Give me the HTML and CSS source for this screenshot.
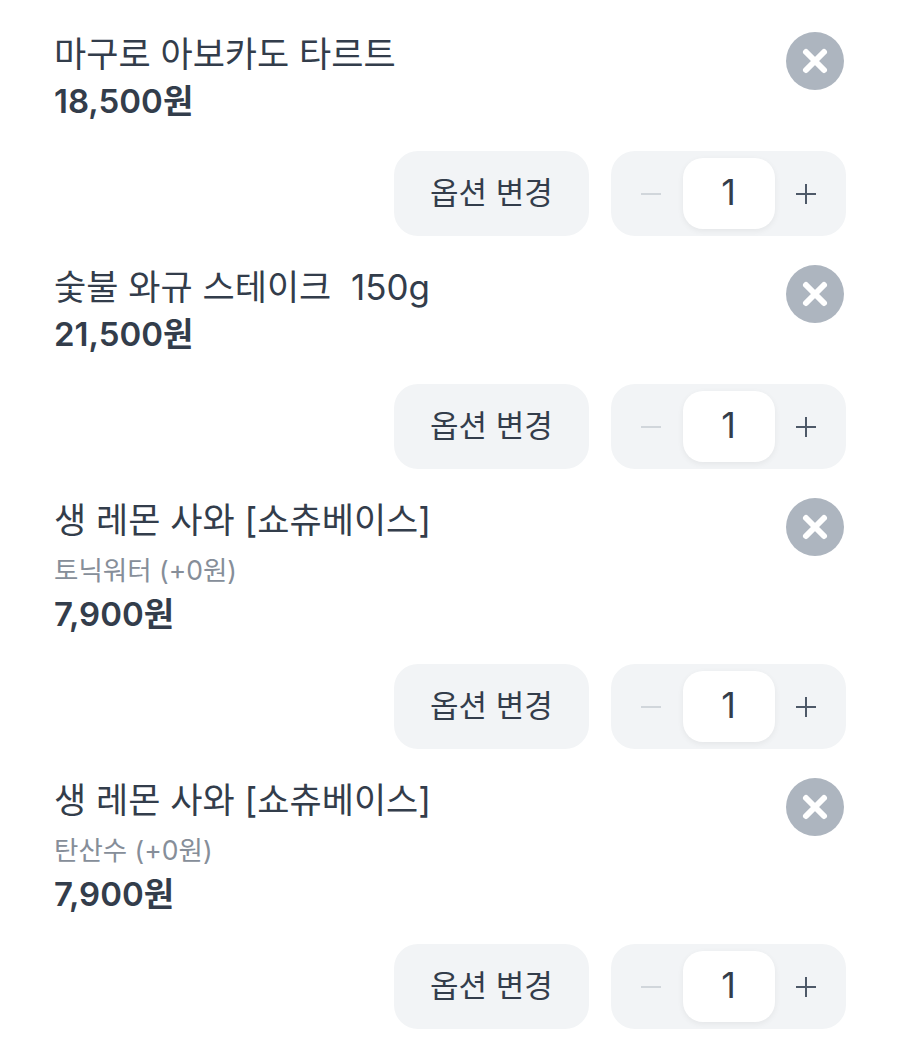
FILE: index.html
```html
<!DOCTYPE html>
<html lang="ko">
<head>
  <meta charset="UTF-8" />
  <meta name="viewport" content="width=device-width, initial-scale=1.0"/>
  <title>장바구니</title>
  <link rel="stylesheet" href="styles.css">
</head>
<body>

  <div class="cart">

    <div class="item">
      <div class="item-top">
        <div class="info">
          <p class="name">마구로 아보카도 타르트</p>
          <p class="price">18,500원</p>
        </div>
        <button class="remove">
          <svg viewBox="0 0 58 58" width="58" height="58"><path d="M20 20 L38 38 M38 20 L20 38" /></svg>
        </button>
      </div>
      <div class="actions">
        <button class="change">옵션 변경</button>
        <div class="stepper">
          <span class="step minus"><svg viewBox="0 0 22 22" width="22" height="22"><path d="M1 11 H21" /></svg></span>
          <span class="count">1</span>
          <span class="step"><svg viewBox="0 0 22 22" width="22" height="22"><path d="M1 11 H21 M11 1 V21" /></svg></span>
        </div>
      </div>
    </div>

    <div class="item">
      <div class="item-top">
        <div class="info">
          <p class="name">숯불 와규 스테이크&nbsp; 150g</p>
          <p class="price">21,500원</p>
        </div>
        <button class="remove">
          <svg viewBox="0 0 58 58" width="58" height="58"><path d="M20 20 L38 38 M38 20 L20 38" /></svg>
        </button>
      </div>
      <div class="actions">
        <button class="change">옵션 변경</button>
        <div class="stepper">
          <span class="step minus"><svg viewBox="0 0 22 22" width="22" height="22"><path d="M1 11 H21" /></svg></span>
          <span class="count">1</span>
          <span class="step"><svg viewBox="0 0 22 22" width="22" height="22"><path d="M1 11 H21 M11 1 V21" /></svg></span>
        </div>
      </div>
    </div>

    <div class="item">
      <div class="item-top">
        <div class="info">
          <p class="name">생 레몬 사와 [쇼츄베이스]</p>
          <p class="option">토닉워터 (+0원)</p>
          <p class="price">7,900원</p>
        </div>
        <button class="remove">
          <svg viewBox="0 0 58 58" width="58" height="58"><path d="M20 20 L38 38 M38 20 L20 38" /></svg>
        </button>
      </div>
      <div class="actions">
        <button class="change">옵션 변경</button>
        <div class="stepper">
          <span class="step minus"><svg viewBox="0 0 22 22" width="22" height="22"><path d="M1 11 H21" /></svg></span>
          <span class="count">1</span>
          <span class="step"><svg viewBox="0 0 22 22" width="22" height="22"><path d="M1 11 H21 M11 1 V21" /></svg></span>
        </div>
      </div>
    </div>

    <div class="item">
      <div class="item-top">
        <div class="info">
          <p class="name">생 레몬 사와 [쇼츄베이스]</p>
          <p class="option">탄산수 (+0원)</p>
          <p class="price">7,900원</p>
        </div>
        <button class="remove">
          <svg viewBox="0 0 58 58" width="58" height="58"><path d="M20 20 L38 38 M38 20 L20 38" /></svg>
        </button>
      </div>
      <div class="actions">
        <button class="change">옵션 변경</button>
        <div class="stepper">
          <span class="step minus"><svg viewBox="0 0 22 22" width="22" height="22"><path d="M1 11 H21" /></svg></span>
          <span class="count">1</span>
          <span class="step"><svg viewBox="0 0 22 22" width="22" height="22"><path d="M1 11 H21 M11 1 V21" /></svg></span>
        </div>
      </div>
    </div>

  </div>

</body>
</html>
```

FILE: styles.css
```css
* {
  margin: 0;
  padding: 0;
  box-sizing: border-box;
}

body {
  font-family: Inter, 'Noto Sans CJK KR', sans-serif;
  background: #fff;
  color: #333d4b;
}

.cart {
  padding: 31px 54px 0 54px;
}

.item {
  margin-bottom: 28px;
}

.item-top {
  display: flex;
  justify-content: space-between;
  align-items: flex-start;
}

.name {
  font-size: 35px;
  line-height: 46px;
}

.option {
  font-size: 26.5px;
  line-height: 44px;
  margin-top: 5px;
  color: #868e99;
}

.price {
  font-size: 33px;
  font-weight: 600;
  line-height: 46px;
  margin-top: 1px;
}

.option + .price {
  margin-top: -1px;
}

.remove {
  width: 58px;
  height: 58px;
  margin: 1px 2px 0 0;
  border: none;
  border-radius: 50%;
  background: #adb5bf;
}

.remove svg {
  display: block;
}

.remove path {
  stroke: #fff;
  stroke-width: 6;
  stroke-linecap: round;
  fill: none;
}

.actions {
  display: flex;
  justify-content: flex-end;
  gap: 22px;
  margin-top: 27px;
}

.change {
  width: 195px;
  height: 85px;
  padding-bottom: 6px;
  border: none;
  border-radius: 24px;
  background: #f2f4f6;
  color: #333d4b;
  font-family: inherit;
  font-size: 31px;
  font-weight: 400;
}

.stepper {
  width: 235px;
  height: 85px;
  padding: 7px 8px;
  display: flex;
  align-items: center;
  border-radius: 24px;
  background: #f2f4f6;
}

.step {
  flex: 1;
  display: flex;
  justify-content: center;
}

.step path {
  stroke: #4e5968;
  stroke-width: 2;
  fill: none;
}

.minus path {
  stroke: #d1d6db;
}

.count {
  width: 92px;
  height: 71px;
  line-height: 69px;
  text-align: center;
  font-size: 36px;
  font-weight: 400;
  background: #fff;
  border-radius: 20px;
  box-shadow: 0 2px 6px rgba(0,0,0,0.06);
}
```
